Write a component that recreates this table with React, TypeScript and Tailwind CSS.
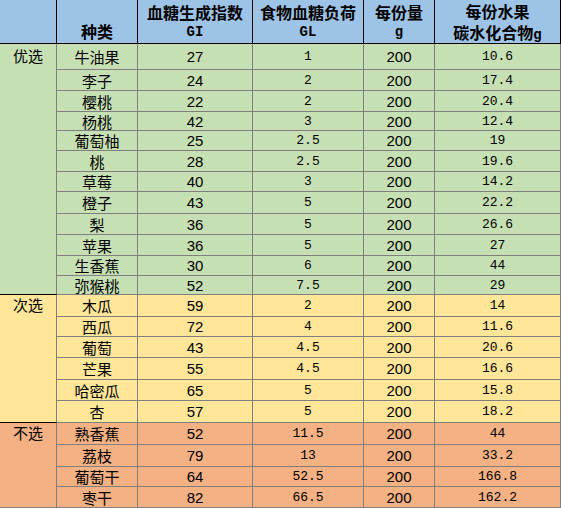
import React from 'react';

type Row = { name: string; gi: string; gl: string; carb: string; h: string };
type Group = { label: string; bg: string; labelH: string; labelBorder: string; rows: Row[] };

const groups: Group[] = [
  {
    label: '优选',
    bg: 'bg-[#c6e0b4]',
    labelH: 'h-[25px]',
    labelBorder: 'border-b-black',
    rows: [
      { name: '牛油果', gi: '27', gl: '1', carb: '10.6', h: 'h-[26px]' },
      { name: '李子', gi: '24', gl: '2', carb: '17.4', h: 'h-[21px]' },
      { name: '樱桃', gi: '22', gl: '2', carb: '20.4', h: 'h-[21px]' },
      { name: '杨桃', gi: '42', gl: '3', carb: '12.4', h: 'h-[19px]' },
      { name: '葡萄柚', gi: '25', gl: '2.5', carb: '19', h: 'h-[20px]' },
      { name: '桃', gi: '28', gl: '2.5', carb: '19.6', h: 'h-[21px]' },
      { name: '草莓', gi: '40', gl: '3', carb: '14.2', h: 'h-[20px]' },
      { name: '橙子', gi: '43', gl: '5', carb: '22.2', h: 'h-[22px]' },
      { name: '梨', gi: '36', gl: '5', carb: '26.6', h: 'h-[21px]' },
      { name: '苹果', gi: '36', gl: '5', carb: '27', h: 'h-[21px]' },
      { name: '生香蕉', gi: '30', gl: '6', carb: '44', h: 'h-[20px]' },
      { name: '弥猴桃', gi: '52', gl: '7.5', carb: '29', h: 'h-[19px]' },
    ],
  },
  {
    label: '次选',
    bg: 'bg-[#ffe699]',
    labelH: 'h-[21px]',
    labelBorder: 'border-b-black',
    rows: [
      { name: '木瓜', gi: '59', gl: '2', carb: '14', h: 'h-[22px]' },
      { name: '西瓜', gi: '72', gl: '4', carb: '11.6', h: 'h-[20px]' },
      { name: '葡萄', gi: '43', gl: '4.5', carb: '20.6', h: 'h-[21px]' },
      { name: '芒果', gi: '55', gl: '4.5', carb: '16.6', h: 'h-[22px]' },
      { name: '哈密瓜', gi: '65', gl: '5', carb: '15.8', h: 'h-[21px]' },
      { name: '杏', gi: '57', gl: '5', carb: '18.2', h: 'h-[22px]' },
    ],
  },
  {
    label: '不选',
    bg: 'bg-[#f4b183]',
    labelH: 'h-[21px]',
    labelBorder: 'border-b-[#7f7f7f]',
    rows: [
      { name: '熟香蕉', gi: '52', gl: '11.5', carb: '44', h: 'h-[22px]' },
      { name: '荔枝', gi: '79', gl: '13', carb: '33.2', h: 'h-[22px]' },
      { name: '葡萄干', gi: '64', gl: '52.5', carb: '166.8', h: 'h-[20px]' },
      { name: '枣干', gi: '82', gl: '66.5', carb: '162.2', h: 'h-[21px]' },
    ],
  },
];

const cjk = "font-['Noto_Sans_CJK_SC',sans-serif]";
const sans = "font-['Liberation_Sans','Noto_Sans_CJK_SC',sans-serif]";
const mono = "font-['Liberation_Mono','Noto_Sans_CJK_SC',monospace]";

const cell = 'flex items-center justify-center border-r border-[#7f7f7f] text-black';
const top = 'block h-[21px] leading-[21px] text-[16px]';
const sub = 'block h-[19px] leading-[19px] text-[14px]';

const App: React.FC = () => {
  return (
    <div className="w-[561px] h-[508px] overflow-hidden bg-white text-black">
      {/* header */}
      <div className="flex h-[44px] bg-[#9dc3e6] border-b border-black font-bold">
        <div className="w-[57px] border-r border-black" />
        <div className={`w-[81px] border-r border-black flex items-end justify-center pb-[1px] text-[16px] leading-[21px] ${cjk}`}>
          种类
        </div>
        <div className="w-[115px] border-r border-black flex flex-col items-center pt-[2px]">
          <span className={`${top} ${cjk}`}>血糖生成指数</span>
          <span className={`${sub} ${mono}`}>GI</span>
        </div>
        <div className="w-[111px] border-r border-black flex flex-col items-center pt-[2px]">
          <span className={`${top} ${cjk}`}>食物血糖负荷</span>
          <span className={`${sub} ${mono}`}>GL</span>
        </div>
        <div className="w-[71px] border-r border-black flex flex-col items-center pt-[2px]">
          <span className={`${top} ${cjk}`}>每份量</span>
          <span className={`${sub} ${mono}`}>g</span>
        </div>
        <div className="w-[126px] border-r border-black flex flex-col items-center pt-[1px]">
          <span className={`${top} ${cjk}`}>每份水果</span>
          <span className={`${top} ${cjk}`}>
            碳水化合物<span className={`text-[14px] ${mono}`}>g</span>
          </span>
        </div>
      </div>

      {groups.map((g) => (
        <div key={g.label} className={`flex ${g.bg}`}>
          <div className={`w-[57px] shrink-0 border-r border-b border-r-[#7f7f7f] ${g.labelBorder}`}>
            <div className={`${g.labelH} flex items-center justify-center text-[15px] ${cjk}`}>{g.label}</div>
          </div>
          <div className="flex flex-col">
            {g.rows.map((r) => (
              <div key={r.name} className={`flex ${r.h} border-b border-[#7f7f7f] leading-none`}>
                <div className={`w-[81px] ${cell} text-[15px] ${cjk}`}>{r.name}</div>
                <div className={`w-[115px] ${cell} text-[15px] ${sans}`}>{r.gi}</div>
                <div className={`w-[111px] ${cell} text-[13px] ${mono}`}>{r.gl}</div>
                <div className={`w-[71px] ${cell} text-[15px] ${sans}`}>200</div>
                <div className={`w-[126px] ${cell} text-[13px] ${mono}`}>{r.carb}</div>
              </div>
            ))}
          </div>
        </div>
      ))}
    </div>
  );
};

export default App;
